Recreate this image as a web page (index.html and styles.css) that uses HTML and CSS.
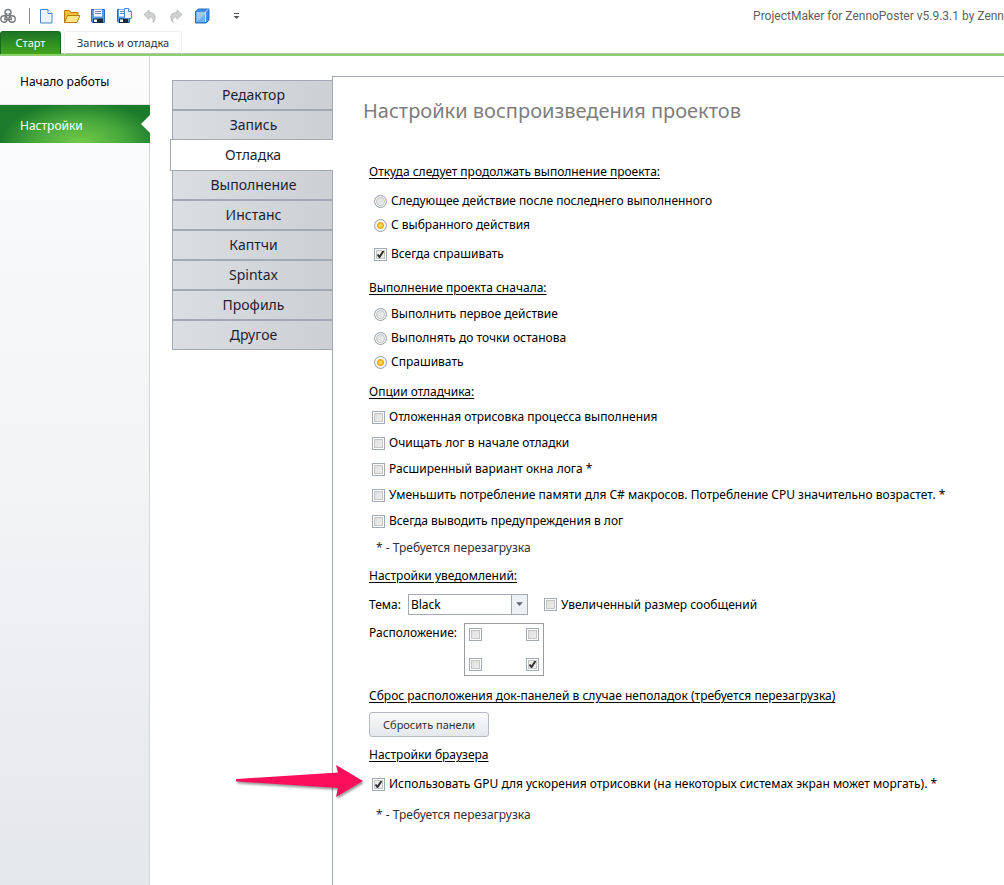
FILE: index.html
```html
<!DOCTYPE html>
<html lang="ru">
<head>
<meta charset="utf-8">
<title>ProjectMaker for ZennoPoster</title>
<link rel="stylesheet" href="styles.css">
</head>
<body>
<div class="app">
  <header class="titlebar">
    <div class="tools">
      <svg class="logo" width="16" height="16" viewBox="0 0 16 16" fill="none" stroke="#777b7e" stroke-width="1.4"><circle cx="8" cy="4.500" r="3"/><circle cx="4" cy="11" r="3.200"/><circle cx="12" cy="11" r="3.200"/><path d="M7 5 4.500 11.500M9 5l2.500 6M4 11.500h8"/></svg>
      <span class="sep"></span>
      <button class="tool" type="button" aria-label="Новый"><svg width="16" height="16" viewBox="0 0 16 16"><path d="M2.500 1.500h7.500l4 4v9.500h-11.500z" fill="#eaf4ff" stroke="#4b86d0"/><path d="M10 1.500v4h4" fill="#fff" stroke="#4b86d0"/></svg></button>
      <button class="tool" type="button" aria-label="Открыть"><svg width="18" height="16" viewBox="0 0 18 16"><path d="M1.500 14.500v-12h5l1.500 2h7v3" fill="#f0bd3c" stroke="#b87c0a"/><path d="M1.500 14.500 4.500 7.500h12.500l-3 7z" fill="#ffe58a" stroke="#b87c0a"/></svg></button>
      <button class="tool" type="button" aria-label="Сохранить"><svg width="16" height="16" viewBox="0 0 16 16"><path d="M1.500 1.500h13v13h-12l-1-1z" fill="#5a9fe4" stroke="#2a68b2"/><path d="M4 1.500h8v7H4z" fill="#f3f8fd"/><path d="M5 3.500h6M5 5.500h6" stroke="#718aa5"/><path d="M3 10.500h10V15H3z" fill="#1f2a36"/><path d="M4 11.500h3V14H4z" fill="#fff"/></svg></button>
      <button class="tool" type="button" aria-label="Сохранить как"><svg width="16" height="16" viewBox="0 0 16 16"><path d="M1.500 1.500h12v13h-11l-1-1z" fill="#5a9fe4" stroke="#2a68b2"/><path d="M3 1.500h5v7H3z" fill="#f3f8fd"/><path d="M4 3.500h4M4 5.500h4" stroke="#718aa5"/><path d="M3 10.500h9V15H3z" fill="#1f2a36"/><path d="M4 11.500h3V14H4z" fill="#fff"/><path d="M8.500.5h4l3 3v7h-7z" fill="#edf5ff" stroke="#4b86d0"/><path d="M12.500.5v3h3" fill="#fff" stroke="#4b86d0"/></svg></button>
      <button class="tool" type="button" aria-label="Отменить"><svg width="16" height="16" viewBox="0 0 16 16"><path d="M2 6.500 7 2v2.500c6 0 8.500 4.500 4 10 .8-3.800-.5-5.500-4-5.500v2.500z" fill="#cfd1d3" stroke="#b2b4b6" stroke-width=".8"/></svg></button>
      <button class="tool" type="button" aria-label="Вернуть"><svg width="16" height="16" viewBox="0 0 16 16"><path d="M14 6.500 9 2v2.500c-6 0-8.500 4.500-4 10-.8-3.800.5-5.500 4-5.500v2.500z" fill="#cfd1d3" stroke="#b2b4b6" stroke-width=".8"/></svg></button>
      <button class="tool" type="button" aria-label="Окно"><svg width="16" height="16" viewBox="0 0 16 16"><path d="m1.500 3.500 3-2.500h10.500v11l-3 3h-10.500z" fill="#3f8ee0" stroke="#2a6fc0"/><path d="M2.500 4h8.500v10h-8.500z" fill="#9ccbf8"/><path d="M2.500 14 11 6v8z" fill="#6fb0f0"/><path d="M11.500 14V4L14 1.500" fill="none" stroke="#cce6fc"/></svg></button>
      <button class="tool more" type="button" aria-label="Ещё"><svg width="7" height="8" viewBox="0 0 7 8"><path d="M1 1.500h5" stroke="#555"/><path d="M.5 4h6l-3 3z" fill="#555"/></svg></button>
    </div>
    <span class="caption">ProjectMaker for ZennoPoster v5.9.3.1 by Zenn</span>
  </header>
  <nav class="ribbon">
    <button class="ribbon-tab current" type="button">Старт</button>
    <button class="ribbon-tab" type="button">Запись и отладка</button>
  </nav>
  <div class="body">
    <aside class="side">
      <button class="side-item" type="button">Начало работы</button>
      <button class="side-item current" type="button">Настройки</button>
    </aside>
    <nav class="sections">
      <button class="section" type="button">Редактор</button>
      <button class="section" type="button">Запись</button>
      <button class="section current" type="button">Отладка</button>
      <button class="section" type="button">Выполнение</button>
      <button class="section" type="button">Инстанс</button>
      <button class="section" type="button">Каптчи</button>
      <button class="section" type="button">Spintax</button>
      <button class="section" type="button">Профиль</button>
      <button class="section" type="button">Другое</button>
    </nav>
    <main class="panel">
      <h1>Настройки воспроизведения проектов</h1>

      <section class="group">
        <h2>Откуда следует продолжать выполнение проекта:</h2>
        <div class="radios first">
          <label class="opt"><input type="radio" name="from">Следующее действие после последнего выполненного</label>
          <label class="opt"><input type="radio" name="from" checked>С выбранного действия</label>
        </div>
        <label class="opt always"><input type="checkbox" checked>Всегда спрашивать</label>
      </section>

      <section class="group wide">
        <h2>Выполнение проекта сначала:</h2>
        <div class="radios">
          <label class="opt"><input type="radio" name="start">Выполнить первое действие</label>
          <label class="opt"><input type="radio" name="start">Выполнять до точки останова</label>
          <label class="opt"><input type="radio" name="start" checked>Спрашивать</label>
        </div>
      </section>

      <section class="group">
        <h2>Опции отладчика:</h2>
        <div class="checks">
          <label class="opt"><input type="checkbox">Отложенная отрисовка процесса выполнения</label>
          <label class="opt"><input type="checkbox">Очищать лог в начале отладки</label>
          <label class="opt"><input type="checkbox">Расширенный вариант окна лога *</label>
          <label class="opt"><input type="checkbox">Уменьшить потребление памяти для C# макросов. Потребление CPU значительно возрастет. *</label>
          <label class="opt"><input type="checkbox">Всегда выводить предупреждения в лог</label>
        </div>
        <p class="note">* - Требуется перезагрузка</p>
      </section>

      <section class="group">
        <h2>Настройки уведомлений:</h2>
        <div class="theme">
          <label for="theme">Тема:</label>
          <span class="combo"><select id="theme"><option>Black</option></select><svg class="arrow" width="16" height="19" viewBox="0 0 16 19"><path d="M4.500 7h7L8 11z" fill="#5a6470"/></svg></span>
          <label class="opt"><input type="checkbox">Увеличенный размер сообщений</label>
        </div>
        <div class="place">
          <span id="place-label">Расположение:</span>
          <div class="corners" role="group" aria-labelledby="place-label">
            <input type="checkbox" aria-label="Слева сверху"><input type="checkbox" aria-label="Справа сверху">
            <input type="checkbox" aria-label="Слева снизу"><input type="checkbox" aria-label="Справа снизу" checked>
          </div>
        </div>
      </section>

      <section class="group">
        <h2>Сброс расположения док-панелей в случае неполадок (требуется перезагрузка)</h2>
        <button class="reset" type="button">Сбросить панели</button>
      </section>

      <section class="group">
        <h2>Настройки браузера</h2>
        <div class="checks gpu">
          <label class="opt"><input type="checkbox" checked>Использовать GPU для ускорения отрисовки (на некоторых системах экран может моргать). *</label>
          <svg class="pointer" width="134" height="40" viewBox="0 0 134 40"><path d="M2.500 16 104 9.500 102 2l27 16-27 16 2-9L2.500 18.500q-1.500-1 0-2.500z" fill="#fb0f5c"/></svg>
        </div>
        <p class="note last">* - Требуется перезагрузка</p>
      </section>
    </main>
  </div>
</div>
</body>
</html>
```
FILE: styles.css
```css
* { box-sizing: border-box; }
body { margin: 0; overflow: hidden; background: #fff; color: #000; font: 12px/20px "Noto Sans", sans-serif; }
button, select { font: inherit; color: inherit; }
button { border: 0; padding: 0; background: none; }
h1, h2, p { margin: 0; }
.app { min-height: 100vh; display: flex; flex-direction: column; }

.titlebar { height: 31px; display: flex; align-items: center; }
.tools { display: flex; align-items: center; flex: none; }
.tool { width: 26px; height: 20px; display: flex; align-items: center; justify-content: center; }
.sep { width: 1px; height: 16px; margin: 0 3px 0 13px; background: #8d9195; }
.more { margin-left: 8px; }
.caption { margin-left: auto; flex: none; white-space: nowrap; font-family: Roboto, sans-serif; color: #5f5f5f; }

.ribbon { height: 25px; display: flex; gap: 3px; border-bottom: 2px solid #8bd06f; box-shadow: inset 0 -1px #b2bfb4; }
.ribbon-tab { min-width: 61px; height: 23px; padding: 0 12px; border: 1px solid #eee; border-bottom: 0; border-radius: 3px 3px 0 0; font-size: 11px; color: #333; }
.ribbon-tab.current { border-color: #17691f; background: linear-gradient(#1d7426, #43a51e); color: #fff; }

.body { flex: 1; display: flex; }
.side { flex: none; width: 150px; border-right: 1px solid #d4d7da; background: linear-gradient(#fcfcfd, #f0f2f4 60%, #e4e7eb); }
.side-item { display: block; width: 100%; height: 49px; padding: 3px 20px 0; text-align: left; border-bottom: 1px solid #e2e4e6; }
.side-item.current { position: relative; width: 150px; height: 38px; border: 0; color: #fff; background: radial-gradient(ellipse 80px 42px at 80px 38px, #72cc48, #48a83c 55%, #1c7b2b); }
.side-item.current::after { content: ""; position: absolute; right: 0; top: 10px; border: 9px solid transparent; border-left: 0; border-right-color: #fff; }

.sections { flex: none; width: 162px; margin: 24px 0 0 21px; padding-left: 1px; position: relative; }
.section { display: block; width: 100%; height: 30px; padding-left: 2px; border: 1px solid #a2a9b5; background: linear-gradient(90deg, #dadee3, #ccd0d4); font-size: 14px; color: #1e1e32; }
.section.current { position: relative; width: 163px; height: 32px; margin: -1px 0 -1px -2px; border-right: 0; background: #fff; }

.panel { flex: 1; min-width: 0; margin: 20px 0 0 -1px; padding: 20px 8px 0 30px; border: solid #a2a9b5; border-width: 1px 0 0 1px; }
.panel h1 { height: 28px; font-size: 20px; line-height: 28px; font-weight: 400; color: #7d7d7d; }
.group { margin: 8px 0 0 6px; }
.panel h1 + .group { margin-top: 37px; }
.panel .wide { margin-top: 12px; }
h2 { font-size: 12px; line-height: 20px; font-weight: 400; text-decoration: underline; text-underline-offset: 2px; }
.opt { display: flex; align-items: center; gap: 4px; height: 24px; white-space: nowrap; }
.radios { margin: 4px 0 0 5px; }
.radios.first { margin-top: 7px; }
.always { margin: 5px 0 0 5px; }
.checks { margin: 2px 0 0 3px; }
.checks .opt { height: 26px; }
.note { margin: 4px 0 0 7px; color: #2e2e40; }
.note.last { margin-top: 8px; }

input { appearance: none; flex: none; width: 13px; height: 13px; margin: 0; border: 1px solid #a2a9b5; background: linear-gradient(135deg, #dcdcdc, #f0f0f0); box-shadow: inset 0 0 0 1px #fff, inset 0 0 0 2px #c3c5c7; }
input[type="radio"] { border-radius: 50%; border-color: #9a9fa8; }
input[type="radio"]:checked { background: radial-gradient(circle, #ffd84a 0 1px, #f0a417 3px, #fff 4px); box-shadow: inset 0 0 0 1px #eee; }
input[type="checkbox"]:checked { background: url("data:image/svg+xml,%3Csvg xmlns='http://www.w3.org/2000/svg' viewBox='0 0 11 11'%3E%3Cpath d='M2.500 5.500 4.500 8 8.500 2' fill='none' stroke='%23333' stroke-width='2'/%3E%3C/svg%3E") #ececec; }

.theme { display: flex; align-items: center; margin-top: 8px; height: 21px; }
.combo { position: relative; width: 120px; height: 21px; margin: 0 16px 0 7px; }
.combo select { appearance: none; width: 100%; height: 100%; padding: 0 2px; border: 1px solid #a2a9b5; border-radius: 0; background: #fff; }
.arrow { position: absolute; right: 1px; top: 1px; border-left: 1px solid #a2a9b5; background: #edf0f4; pointer-events: none; }
.place { display: flex; gap: 7px; margin-top: 8px; }
.corners { width: 80px; height: 53px; padding: 4px; border: 1px solid #999ca0; display: grid; grid-template-columns: 13px 13px; justify-content: space-between; align-content: space-between; }
.place + .group, .panel .group:nth-last-child(2) { margin-top: 10px; }
.reset { display: block; width: 120px; height: 25px; margin-top: 6px; border: 1px solid #b5bac0; border-radius: 3px; background: linear-gradient(#f8fafb, #e4e8ed); font-size: 11px; line-height: 16px; color: #333; }
.gpu { position: relative; margin-top: 6px; }
.pointer { position: absolute; left: -138px; top: -8px; filter: drop-shadow(1px 2px 1px #0006); }
```
